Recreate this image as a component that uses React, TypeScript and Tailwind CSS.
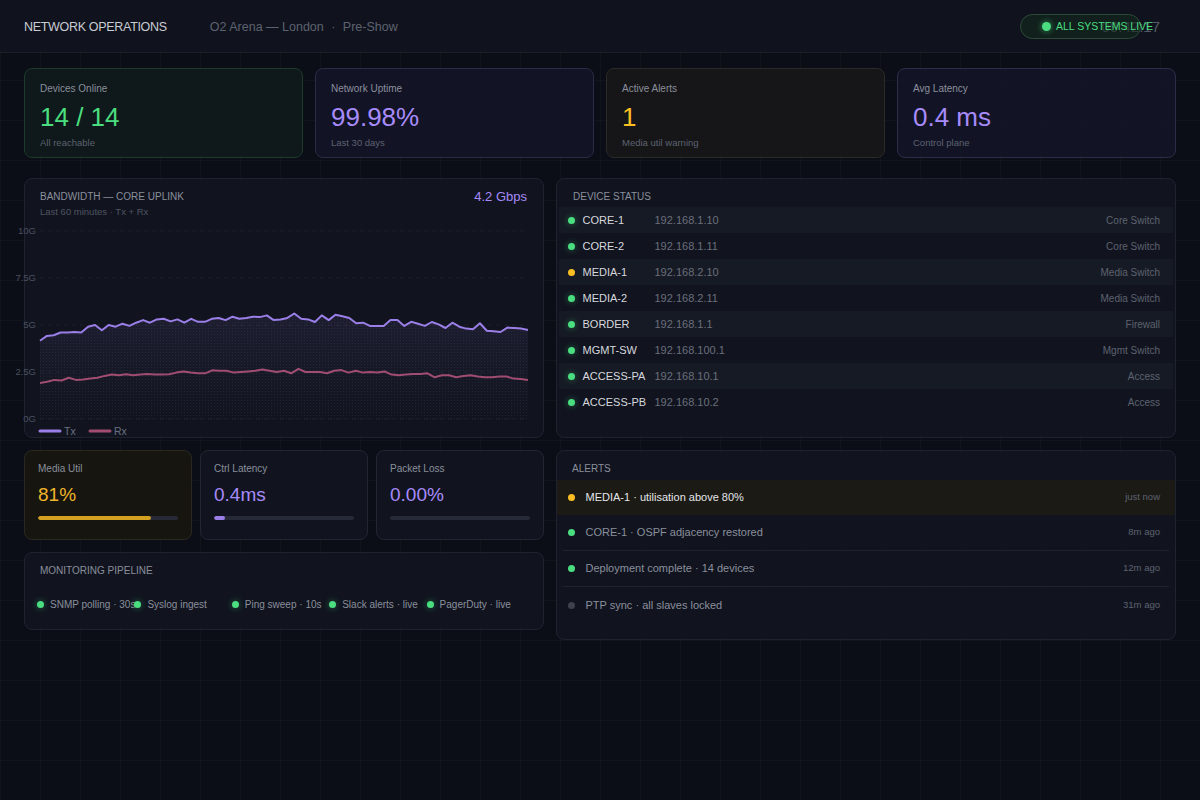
import React from 'react'

const tx = [
  4.16, 4.42, 4.46, 4.6, 4.6, 4.63, 4.6, 4.91, 5.0, 4.72, 5.0, 4.91, 5.07, 4.95, 5.12, 5.26, 5.12, 5.3, 5.33, 5.19,
  5.3, 5.12, 5.33, 5.17, 5.17, 5.33, 5.37, 5.26, 5.44, 5.33, 5.38, 5.44, 5.42, 5.51, 5.26, 5.3, 5.38, 5.61, 5.33, 5.3,
  5.16, 5.51, 5.26, 5.54, 5.47, 5.37, 5.09, 5.12, 4.95, 4.95, 4.95, 5.26, 5.26, 4.95, 5.17, 5.07, 4.95, 5.16, 5.03,
  4.84, 5.12, 4.91, 4.81, 4.77, 5.09, 4.69, 4.67, 4.63, 4.86, 4.84, 4.81, 4.74,
]

const rx = [
  1.92, 1.98, 2.08, 2.05, 2.19, 2.08, 2.1, 2.15, 2.19, 2.29, 2.36, 2.33, 2.38, 2.33, 2.36, 2.4, 2.36, 2.36, 2.38, 2.47,
  2.53, 2.47, 2.43, 2.43, 2.59, 2.57, 2.57, 2.47, 2.5, 2.53, 2.57, 2.64, 2.57, 2.5, 2.57, 2.43, 2.67, 2.5, 2.5, 2.5,
  2.43, 2.57, 2.6, 2.47, 2.57, 2.47, 2.5, 2.47, 2.53, 2.36, 2.33, 2.36, 2.4, 2.4, 2.43, 2.22, 2.33, 2.33, 2.22, 2.29,
  2.33, 2.26, 2.22, 2.22, 2.26, 2.26, 2.15, 2.12, 2.08,
]

const kpis = [
  { label: 'Devices Online', value: '14 / 14', sub: 'All reachable', card: 'bg-[#0f1a1b]/90 border-[#1d3a2b]', tone: 'text-[#4ade80]' },
  { label: 'Network Uptime', value: '99.98%', sub: 'Last 30 days', card: 'bg-[#131427]/90 border-[#2a2c45]', tone: 'text-[#a78bfa]' },
  { label: 'Active Alerts', value: '1', sub: 'Media util warning', card: 'bg-[#171718]/90 border-[#2a2a26]', tone: 'text-[#fbbf24]' },
  { label: 'Avg Latency', value: '0.4 ms', sub: 'Control plane', card: 'bg-[#131527]/90 border-[#2b2e48]', tone: 'text-[#a78bfa]' },
]

const devices = [
  { name: 'CORE-1', ip: '192.168.1.10', type: 'Core Switch', warn: false },
  { name: 'CORE-2', ip: '192.168.1.11', type: 'Core Switch', warn: false },
  { name: 'MEDIA-1', ip: '192.168.2.10', type: 'Media Switch', warn: true },
  { name: 'MEDIA-2', ip: '192.168.2.11', type: 'Media Switch', warn: false },
  { name: 'BORDER', ip: '192.168.1.1', type: 'Firewall', warn: false },
  { name: 'MGMT-SW', ip: '192.168.100.1', type: 'Mgmt Switch', warn: false },
  { name: 'ACCESS-PA', ip: '192.168.10.1', type: 'Access', warn: false },
  { name: 'ACCESS-PB', ip: '192.168.10.2', type: 'Access', warn: false },
]

const alerts = [
  { text: 'MEDIA-1 · utilisation above 80%', time: 'just now', dot: 'bg-[#fbbf24]', active: true },
  { text: 'CORE-1 · OSPF adjacency restored', time: '8m ago', dot: 'bg-[#4ade80]', active: false },
  { text: 'Deployment complete · 14 devices', time: '12m ago', dot: 'bg-[#4ade80]', active: false },
  { text: 'PTP sync · all slaves locked', time: '31m ago', dot: 'bg-[#3f424d]', active: false },
]

const pipeline = ['SNMP polling · 30s', 'Syslog ingest', 'Ping sweep · 10s', 'Slack alerts · live', 'PagerDuty · live']

const W = 488
const top = 8
const bottom = 196
const yOf = (g: number) => bottom - (g / 10) * (bottom - top)
const pts = (arr: number[]) => arr.map((g, i) => `${((i / (arr.length - 1)) * W).toFixed(1)},${yOf(g).toFixed(1)}`).join(' ')

const BandwidthChart = () => {
  const txPts = pts(tx)
  return (
    <svg width={W} height={214} className="overflow-visible block">
      <defs>
        <pattern id="dots" width="3" height="3" patternUnits="userSpaceOnUse">
          <rect width="1" height="1" fill="#ffffff" opacity="0.06" />
        </pattern>
        <linearGradient id="txfill" x1="0" y1="0" x2="0" y2="1">
          <stop offset="0%" stopColor="#a78bfa" stopOpacity="0.08" />
          <stop offset="100%" stopColor="#a78bfa" stopOpacity="0" />
        </linearGradient>
      </defs>
      {[10, 7.5, 5, 2.5, 0].map((g) => (
        <g key={g}>
          <line x1={0} x2={W} y1={yOf(g)} y2={yOf(g)} stroke="#ffffff" strokeOpacity="0.05" strokeDasharray="4 4" />
          <text x={-4} y={yOf(g) + 3} textAnchor="end" fontSize="9.5" fill="#4b5060" fontFamily="Liberation Sans, Arial, sans-serif">
            {g}G
          </text>
        </g>
      ))}
      <polygon points={`0,${bottom} ${txPts} ${W},${bottom}`} fill="url(#txfill)" />
      <polygon points={`0,${bottom} ${txPts} ${W},${bottom}`} fill="url(#dots)" />
      <polyline points={txPts} fill="none" stroke="#9b7fe8" strokeWidth="2" strokeLinejoin="round" />
      <polyline points={pts(rx)} fill="none" stroke="#a14d72" strokeWidth="2" strokeLinejoin="round" />
      <line x1={0} x2={20} y1={208} y2={208} stroke="#9b7fe8" strokeWidth="3" strokeLinecap="round" />
      <text x={24} y={211.5} fontSize="10.5" fill="#6b7080" fontFamily="Liberation Sans, Arial, sans-serif">Tx</text>
      <line x1={50} x2={70} y1={208} y2={208} stroke="#a14d72" strokeWidth="3" strokeLinecap="round" />
      <text x={74} y={211.5} fontSize="10.5" fill="#6b7080" fontFamily="Liberation Sans, Arial, sans-serif">Rx</text>
    </svg>
  )
}

const Dot = ({ warn }: { warn?: boolean }) => (
  <span
    className={`w-[7px] h-[7px] rounded-full shrink-0 ${
      warn ? 'bg-[#fbbf24]' : 'bg-[#4ade80] shadow-[0_0_5px_2px_rgba(74,222,128,0.18)]'
    }`}
  />
)

const MiniCard = ({ label, value, pct, warn }: { label: string; value: string; pct: number; warn?: boolean }) => (
  <div
    className={`rounded-lg border px-[13px] pt-[11px] pb-[14px] h-[90px] ${
      warn ? 'bg-[#17160f]/90 border-[#2a2820]' : 'bg-[#121520]/90 border-[#222633]'
    }`}
  >
    <div className="text-[10px] leading-[14px] text-[#8a8f9c]">{label}</div>
    <div className={`text-[19px] mt-[7px] leading-6 ${warn ? 'text-[#f0b429]' : 'text-[#a78bfa]'}`}>{value}</div>
    <div className="mt-[9px] h-[4px] rounded-full bg-[#262a36] overflow-hidden">
      <div className={`h-full rounded-full ${warn ? 'bg-[#d4a020]' : 'bg-[#9b7fe8]'}`} style={{ width: `${pct}%` }} />
    </div>
  </div>
)

export default function App() {
  return (
    <div
      className="min-h-screen w-full bg-[#0b0e16] text-gray-300 bg-[linear-gradient(to_right,rgba(255,255,255,0.022)_1px,transparent_1px),linear-gradient(to_bottom,rgba(255,255,255,0.022)_1px,transparent_1px)] bg-[size:40px_40px]"
      style={{ fontFamily: '"Liberation Sans", Arial, sans-serif' }}
    >
      <header className="relative h-[53px] pl-6 pr-[40px] flex items-center bg-[#11141d]/95 border-b border-[#1b1f2a]">
        <div className="text-[12.5px] font-medium text-[#c9ccd3] tracking-tight pt-[3px]">NETWORK OPERATIONS</div>
        <div className="ml-[43px] text-[12.5px] text-[#5d6270] pt-[3px]">
          O2 Arena — London <span className="mx-1">·</span> Pre-Show
        </div>
        <span className="ml-auto text-[15px] text-[#555a67] pt-[3px]">09:42:17</span>
        <div className="absolute left-[1020px] top-[14px] h-[25px] w-[121px] rounded-full border border-[#2b4a36] bg-[#132a1d]/60 flex items-center pl-[21px]">
          <span className="shrink-0 w-[9px] h-[9px] rounded-full bg-[#4ade80] shadow-[0_0_5px_2px_rgba(74,222,128,0.3)]" />
          <span className="ml-[5px] text-[10.5px] text-[#4ade80] whitespace-nowrap">ALL SYSTEMS LIVE</span>
        </div>
      </header>

      <main className="px-6 pt-[15px]">
        <div className="grid grid-cols-4 gap-3">
          {kpis.map((k) => (
            <div key={k.label} className={`rounded-lg border h-[90px] pl-[15px] pt-[13px] ${k.card}`}>
              <div className="text-[10px] leading-[14px] text-[#8a8f9c]">{k.label}</div>
              <div className={`text-[26px] leading-8 mt-[5px] ${k.tone}`}>{k.value}</div>
              <div className="text-[9.5px] text-[#5d6270] mt-[3px]">{k.sub}</div>
            </div>
          ))}
        </div>

        <div className="grid grid-cols-[520px_1fr] gap-3 mt-5">
          <div className="rounded-lg border border-[#1f2330] bg-[#121520]/90 h-[260px] pl-[15px] pr-4 pt-[11px]">
            <div className="flex justify-between items-start">
              <div>
                <div className="text-[10px] leading-[14px] text-[#8a8f9c]">BANDWIDTH — CORE UPLINK</div>
                <div className="text-[9.5px] leading-[12px] text-[#4f5361] mt-[2px]">Last 60 minutes · Tx + Rx</div>
              </div>
              <div className="text-[13px] leading-[14px] text-[#a78bfa]">4.2 Gbps</div>
            </div>
            <div className="mt-[5px]">
              <BandwidthChart />
            </div>
          </div>

          <div className="rounded-lg border border-[#1f2330] bg-[#121520]/90 h-[260px] px-[2px] pt-[11px]">
            <div className="text-[10px] leading-[14px] text-[#8a8f9c] px-[14px] mb-[3px]">DEVICE STATUS</div>
            {devices.map((d, i) => (
              <div
                key={d.name}
                className={`h-[26px] flex items-center pl-[8.5px] pr-[13px] ${i % 2 === 0 ? 'bg-[#161a24]' : ''}`}
              >
                <Dot warn={d.warn} />
                <span className="ml-[8px] w-[72px] text-[11px] text-[#d6d8de]">{d.name}</span>
                <span className="text-[11px] text-[#6a6f7c]">{d.ip}</span>
                <span className="ml-auto text-[10px] text-[#5d6270]">{d.type}</span>
              </div>
            ))}
          </div>
        </div>

        <div className="grid grid-cols-[520px_1fr] gap-3 mt-3 items-start">
          <div className="flex flex-col gap-3">
            <div className="grid grid-cols-3 gap-2">
              <MiniCard label="Media Util" value="81%" pct={81} warn />
              <MiniCard label="Ctrl Latency" value="0.4ms" pct={8} />
              <MiniCard label="Packet Loss" value="0.00%" pct={0} />
            </div>
            <div className="rounded-lg border border-[#1f2330] bg-[#121520]/90 h-[78px] pl-[15px] pr-4 pt-[11px]">
              <div className="text-[10px] leading-[14px] text-[#8a8f9c]">MONITORING PIPELINE</div>
              <div className="grid grid-cols-5 mt-[19px]">
                {pipeline.map((p) => (
                  <div key={p} className="flex items-center gap-[6px] whitespace-nowrap -ml-[3px]">
                    <Dot />
                    <span className="text-[10px] text-[#8a8f9c]">{p}</span>
                  </div>
                ))}
              </div>
            </div>
          </div>

          <div className="rounded-lg border border-[#1f2330] bg-[#121520]/90 h-[190px] pt-[11px]">
            <div className="text-[10px] leading-[14px] text-[#8a8f9c] px-[15px] mb-[4px]">ALERTS</div>
            {alerts.map((a) => (
              <div
                key={a.text}
                className={`flex items-center ${
                  a.active
                    ? 'h-[35px] bg-[#1b1a14] pl-[10.5px] pr-[15px]'
                    : 'h-[36px] mx-[6px] pl-[4.5px] pr-[9px] border-b border-[#1f2330] last:border-b-0'
                }`}
              >
                <span className={`shrink-0 w-[7px] h-[7px] rounded-full ${a.dot}`} />
                <span className={`ml-[11px] text-[11px] ${a.active ? 'text-[#e4e6ea]' : 'text-[#8a8f9c]'}`}>{a.text}</span>
                <span className="ml-auto text-[9.5px] text-[#5d6270]">{a.time}</span>
              </div>
            ))}
          </div>
        </div>
      </main>
    </div>
  )
}
